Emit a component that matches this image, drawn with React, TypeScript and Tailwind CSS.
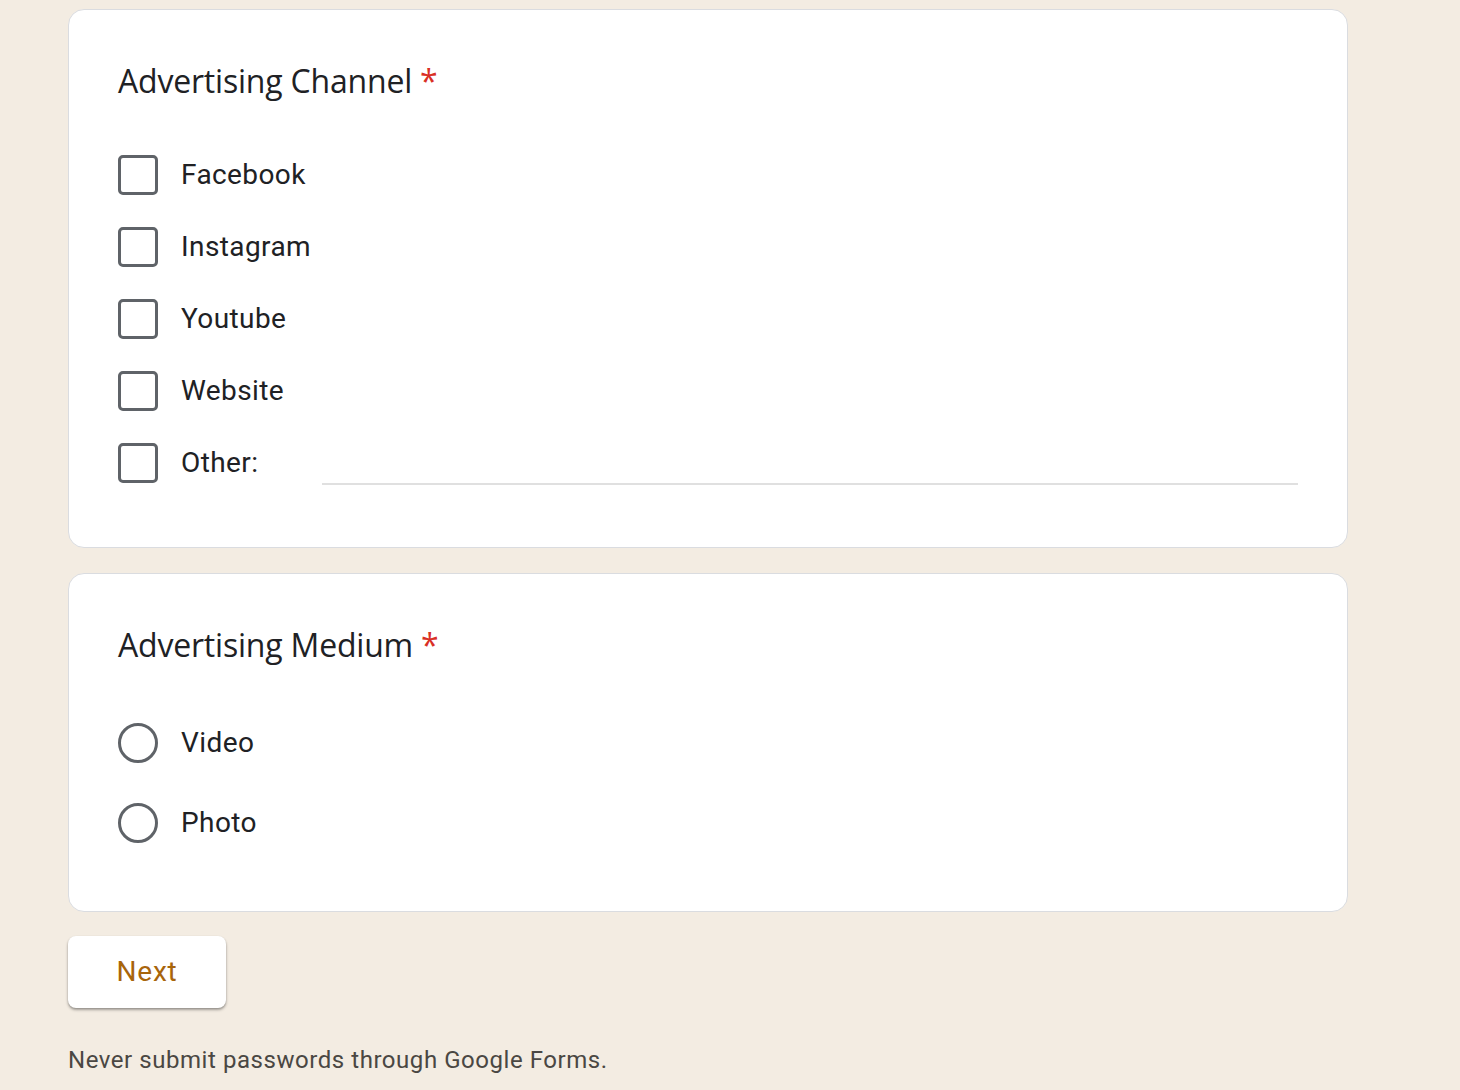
import React from "react";

const Checkbox = () => (
  <div className="w-[40px] h-[40px] shrink-0 rounded-[5px] border-[3px] border-[#5f6368] bg-white" />
);
const Radio = () => (
  <div className="w-[40px] h-[40px] shrink-0 rounded-full border-[3px] border-[#5f6368] bg-white" />
);

export default function App() {
  const channels = ["Facebook", "Instagram", "Youtube", "Website"];
  return (
    <div className="min-h-[1090px] w-full bg-[#f3ece2] pt-[9px] pl-[68px]" style={{ fontFamily: "Roboto, 'Liberation Sans', sans-serif" }}>
      <div className="w-[1280px]">
        <div className="bg-white border border-[#dadce0] rounded-[16px] pt-[47px] pb-[48px] px-[49px] mb-[25px]">
          <div className="h-[48px] leading-[48px] text-[32px] text-[#202124] tracking-[-0.2px]" style={{ fontFamily: "'Open Sans', Roboto, sans-serif" }}>
            Advertising Channel<span className="ml-[8px] text-[#d93025]">*</span>
          </div>
          <div className="mt-[34px]">
            {channels.map((c) => (
              <div key={c} className="h-[72px] flex items-center">
                <Checkbox />
                <span className="ml-[23px] text-[28px] text-[#202124] tracking-[0.4px]">{c}</span>
              </div>
            ))}
            <div className="h-[72px] flex items-center">
              <Checkbox />
              <span className="ml-[23px] w-[141px] text-[28px] text-[#202124] tracking-[0.4px]">Other:</span>
              <div className="flex-1 self-end mb-[14px] border-b-2 border-[#e0e0e0]" />
            </div>
          </div>
        </div>

        <div className="bg-white border border-[#dadce0] rounded-[16px] pt-[47px] pb-[48px] px-[49px] mb-[24px]">
          <div className="h-[48px] leading-[48px] text-[32px] text-[#202124] tracking-[-0.2px]" style={{ fontFamily: "'Open Sans', Roboto, sans-serif" }}>
            Advertising Medium<span className="ml-[8px] text-[#d93025]">*</span>
          </div>
          <div className="mt-[34px]">
            {["Video", "Photo"].map((c) => (
              <div key={c} className="h-[80px] flex items-center">
                <Radio />
                <span className="ml-[23px] text-[28px] text-[#202124] tracking-[0.4px]">{c}</span>
              </div>
            ))}
          </div>
        </div>

        <button className="w-[158px] h-[72px] bg-white rounded-[8px] shadow-[0_2px_3px_rgba(0,0,0,0.3),0_1px_2px_rgba(0,0,0,0.15)] text-[28px] font-normal text-[#a8650b] tracking-[0.8px]">
          Next
        </button>

        <div className="mt-[36px] h-[32px] leading-[32px] text-[24px] text-[#4a4743] tracking-[0.55px]">
          Never submit passwords through Google Forms.
        </div>
      </div>
    </div>
  );
}
